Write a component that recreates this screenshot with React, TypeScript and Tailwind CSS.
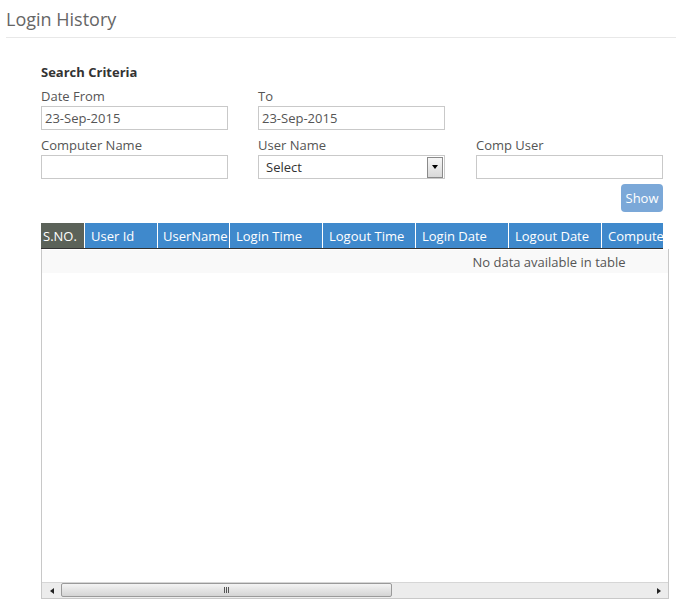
import React from "react";

const COLUMNS = [
  { label: "S.NO.", width: 43, pad: 2 },
  { label: "User Id", width: 73, pad: 6 },
  { label: "UserName", width: 72, pad: 5 },
  { label: "Login Time", width: 93, pad: 6 },
  { label: "Logout Time", width: 93, pad: 6 },
  { label: "Login Date", width: 93, pad: 6 },
  { label: "Logout Date", width: 93, pad: 6 },
  { label: "Computer Name", width: 120, pad: 6 },
  { label: "Comp User", width: 100, pad: 6 },
  { label: "IP Address", width: 100, pad: 6 },
  { label: "Status", width: 134, pad: 6 },
];

const TABLE_WIDTH = COLUMNS.reduce((sum, c) => sum + c.width, 0);

function Field({
  label,
  value,
  className = "",
}: {
  label: string;
  value?: string;
  className?: string;
}) {
  return (
    <div className={`w-[187px] ${className}`}>
      <div className="h-[20px] text-[13px] leading-[21px] text-[#555]">{label}</div>
      <div className="h-[24px] border border-[#c9c9c9] bg-white pl-[3px] text-[13px] leading-[23px] text-[#555]">
        {value}
      </div>
    </div>
  );
}

function SelectField({ label }: { label: string }) {
  return (
    <div className="w-[187px]">
      <div className="h-[20px] text-[13px] leading-[21px] text-[#555]">{label}</div>
      <div className="flex h-[24px] items-center border border-[#c9c9c9] bg-white">
        <span className="flex-1 pl-[7px] pt-[1px] text-[13px] text-[#333]">Select</span>
        <div className="mr-[1px] flex h-[21px] w-[16px] items-center justify-center border border-[#8a8a8a] bg-gradient-to-b from-[#f6f6f6] to-[#d9d9d9]">
          <div className="h-0 w-0 border-x-[3.5px] border-t-[4px] border-x-transparent border-t-black" />
        </div>
      </div>
    </div>
  );
}

export default function App() {
  return (
    <div
      className="h-[608px] w-[676px] overflow-hidden bg-white"
      style={{ fontFamily: '"Open Sans", "Liberation Sans", sans-serif' }}
    >
      <div className="ml-[6px] border-b border-[#e8e8e8] pt-[7px] pb-[6px]">
        <h1 className="text-[18px] leading-[24px] font-normal text-[#666]">Login History</h1>
      </div>

      <div className="ml-[41px] w-[628px]">
        <div className="mt-[25px] h-[19px] text-[13px] leading-[19px] font-bold text-[#333]">
          Search Criteria
        </div>

        <div className="mt-[4px] flex gap-[30px]">
          <Field label="Date From" value="23-Sep-2015" />
          <Field label="To" value="23-Sep-2015" />
        </div>

        <div className="mt-[5px] flex gap-[30px]">
          <Field label="Computer Name" />
          <SelectField label="User Name" />
          <Field label="Comp User" className="ml-[1px]" />
        </div>

        <div className="mt-[5px] flex w-[622px] justify-end">
          <button
            type="button"
            className="h-[28px] w-[42px] rounded-[4px] bg-[#7ba8d8] pt-[1px] text-[13px] text-white"
          >
            Show
          </button>
        </div>

        <div className="mt-[11px] w-[622px] overflow-hidden">
          <div className="flex h-[26px] border-b border-[#333]" style={{ width: TABLE_WIDTH }}>
            {COLUMNS.map((col, i) => (
              <div
                key={col.label}
                className={
                  i === 0
                    ? "shrink-0 bg-[#5b6259] text-[13px] leading-[27px] whitespace-nowrap text-white"
                    : "shrink-0 border-l border-white bg-[#3f89cc] text-[13px] leading-[27px] whitespace-nowrap text-white"
                }
                style={{ width: col.width, paddingLeft: col.pad }}
              >
                {col.label}
              </div>
            ))}
          </div>
        </div>

        <div className="flex h-[350px] w-[628px] flex-col border-x border-b border-[#c8c8c8]">
          <div className="flex-1 overflow-hidden">
            <div
              className="mt-[1px] h-[23px] bg-[#f9f9f9] text-center text-[13px] leading-[25px] text-[#555]"
              style={{ width: TABLE_WIDTH }}
            >
              No data available in table
            </div>
          </div>

          <div className="flex h-[16px] items-stretch border-t border-[#d6d6d6] bg-[#ececec]">
            <div className="flex w-[19px] items-center justify-center">
              <div className="h-0 w-0 border-y-[3.5px] border-r-[4px] border-y-transparent border-r-[#222]" />
            </div>
            <div className="relative flex-1">
              <div className="absolute top-0 bottom-[1px] left-0 flex w-[331px] items-center justify-center rounded-[2px] border border-[#9a9a9a] bg-gradient-to-b from-[#f4f4f4] to-[#d4d4d4]">
                <div className="flex gap-[1px]">
                  <div className="h-[6px] w-[1px] bg-[#555]" />
                  <div className="h-[6px] w-[1px] bg-[#555]" />
                  <div className="h-[6px] w-[1px] bg-[#555]" />
                </div>
              </div>
            </div>
            <div className="flex w-[19px] items-center justify-center">
              <div className="h-0 w-0 border-y-[3.5px] border-l-[4px] border-y-transparent border-l-[#222]" />
            </div>
          </div>
        </div>
      </div>
    </div>
  );
}
